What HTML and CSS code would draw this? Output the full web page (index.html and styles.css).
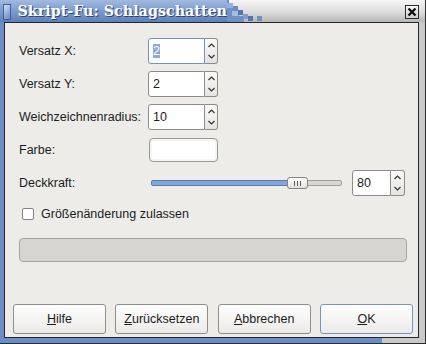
FILE: index.html
```html
<!DOCTYPE html>
<html lang="de">
<head>
  <meta charset="UTF-8">
  <title>Skript-Fu: Schlagschatten</title>
  <link rel="stylesheet" href="styles.css">
</head>
<body>
  <div class="window">
    <!-- Titelleiste -->
    <div class="titlebar">
      <div class="title-blue">
        <span class="app-icon"></span>
        <span class="title-text">Skript-Fu: Schlagschatten</span>
      </div>
      <svg class="title-steps" width="40" height="22" viewBox="0 0 40 22">
        <polygon points="0,0 0,22 17,22 17,16 12,16 12,11 7,11 7,6 2,6 2,0" fill="#6f90c6"/>
        <rect x="0" y="3" width="6" height="5" fill="#97b1dc"/>
        <rect x="6" y="6" width="5" height="5" fill="#6c8dc4"/>
        <rect x="11" y="10" width="5" height="5" fill="#5576b1"/>
        <rect x="5" y="11" width="6" height="5" fill="#a6bde3"/>
        <rect x="16" y="14" width="5" height="5" fill="#7d9dd1"/>
        <rect x="21" y="16" width="5" height="5" fill="#5576b1"/>
        <rect x="30" y="16" width="5" height="5" fill="#6f90c6"/>
      </svg>
      <button class="close-btn" type="button">
        <svg width="12" height="12" viewBox="0 0 12 12">
          <path d="M2.5 2.5 L9.5 9.5 M9.5 2.5 L2.5 9.5" stroke="#111" stroke-width="2.4"/>
        </svg>
      </button>
    </div>

    <div class="client">
      <div class="form">
        <label>Versatz X:</label>
        <div class="spin focused">
          <div class="spin-entry"><span class="selected">2</span></div>
          <div class="spin-btns">
            <span class="spin-half"><svg width="9" height="6" viewBox="0 0 9 6"><polyline points="1.5,5 4.5,2 7.5,5" fill="none" stroke="#333" stroke-width="1.2"/></svg></span>
            <span class="spin-half"><svg width="9" height="6" viewBox="0 0 9 6"><polyline points="1.5,1 4.5,4 7.5,1" fill="none" stroke="#333" stroke-width="1.2"/></svg></span>
          </div>
        </div>

        <label>Versatz Y:</label>
        <div class="spin">
          <div class="spin-entry">2</div>
          <div class="spin-btns">
            <span class="spin-half"><svg width="9" height="6" viewBox="0 0 9 6"><polyline points="1.5,5 4.5,2 7.5,5" fill="none" stroke="#333" stroke-width="1.2"/></svg></span>
            <span class="spin-half"><svg width="9" height="6" viewBox="0 0 9 6"><polyline points="1.5,1 4.5,4 7.5,1" fill="none" stroke="#333" stroke-width="1.2"/></svg></span>
          </div>
        </div>

        <label>Weichzeichnenradius:</label>
        <div class="spin">
          <div class="spin-entry">10</div>
          <div class="spin-btns">
            <span class="spin-half"><svg width="9" height="6" viewBox="0 0 9 6"><polyline points="1.5,5 4.5,2 7.5,5" fill="none" stroke="#333" stroke-width="1.2"/></svg></span>
            <span class="spin-half"><svg width="9" height="6" viewBox="0 0 9 6"><polyline points="1.5,1 4.5,4 7.5,1" fill="none" stroke="#333" stroke-width="1.2"/></svg></span>
          </div>
        </div>

        <label>Farbe:</label>
        <div class="color-btn"><span class="color-swatch"></span></div>

        <label>Deckkraft:</label>
        <div class="slider-row">
          <div class="slider">
            <div class="slider-fill" style="width: 146px;"></div>
            <div class="slider-thumb" style="left: 135px;"><i></i><i></i><i></i></div>
          </div>
          <div class="spin spin-wide">
            <div class="spin-entry">80</div>
            <div class="spin-btns">
              <span class="spin-half"><svg width="9" height="6" viewBox="0 0 9 6"><polyline points="1.5,5 4.5,2 7.5,5" fill="none" stroke="#333" stroke-width="1.2"/></svg></span>
              <span class="spin-half"><svg width="9" height="6" viewBox="0 0 9 6"><polyline points="1.5,1 4.5,4 7.5,1" fill="none" stroke="#333" stroke-width="1.2"/></svg></span>
            </div>
          </div>
        </div>
      </div>

      <label class="check-row"><span class="checkbox"></span>Größenänderung zulassen</label>

      <div class="progress"></div>

      <div class="button-row">
        <button type="button"><u>H</u>ilfe</button>
        <button type="button"><u>Z</u>urücksetzen</button>
        <button type="button"><u>A</u>bbrechen</button>
        <button type="button" class="btn-default"><u>O</u>K</button>
      </div>
    </div>
  </div>
</body>
</html>
```

FILE: styles.css
```css
body {
  margin: 0;
  font-family: "Liberation Sans", Arial, sans-serif;
  font-size: 12.5px;
  color: #1c1c1c;
}
.window {
  width: 426px;
  height: 344px;
  box-sizing: border-box;
  display: flex;
  flex-direction: column;
  background: linear-gradient(to right, #6d8ec5 0, #6d8ec5 382px, #c9c9c9 382px);
  border-right: 1px solid #333;
  border-bottom: 1px solid #2c2c2c;
}

/* Titelleiste */
.titlebar {
  height: 22px;
  flex: none;
  display: flex;
  align-items: stretch;
  background: linear-gradient(#f5f5f5, #dcdcdc 55%, #b7b7b7);
}
.title-blue {
  width: 227px;
  flex: none;
  display: flex;
  align-items: center;
  gap: 6px;
  padding-left: 3px;
  box-sizing: border-box;
  background: linear-gradient(#a2bae0, #7b9acd 50%, #5f80ba);
}
.app-icon {
  width: 16px;
  height: 16px;
  box-sizing: border-box;
  border: 1px solid #3f5f95;
  background: linear-gradient(135deg, #d4e0f3, #8eaadb 60%, #6a8bc3);
  margin-top: 1px;
}
.title-text {
  font-family: "DejaVu Serif", serif;
  font-weight: bold;
  font-size: 14.3px;
  color: #fff;
  text-shadow: 1px 1px 0 #2f4570;
  white-space: nowrap;
}
.title-steps {
  flex: none;
  display: block;
}
.close-btn {
  margin: 5px 6px 0 auto;
  width: 14px;
  height: 14px;
  padding: 0;
  box-sizing: border-box;
  border: 1px solid #2a2a2a;
  background: linear-gradient(#fafafa, #cecece);
  display: flex;
  align-items: center;
  justify-content: center;
}

/* Inhalt */
.client {
  flex: 1;
  margin: 0 6px 5px 4px;
  border: 1px solid #262626;
  background: #edece9;
  padding: 15px 11px 0 14px;
}
.form {
  display: grid;
  grid-template-columns: 129px 1fr;
  grid-auto-rows: 26px;
  row-gap: 7px;
  align-items: center;
}

.spin {
  display: flex;
  width: 70px;
  height: 26px;
}
.spin-entry {
  flex: 1;
  box-sizing: border-box;
  border: 1px solid #8d8c8a;
  border-radius: 3px 0 0 3px;
  background: #fff;
  padding-left: 4px;
  line-height: 24px;
}
.focused .spin-entry {
  border-color: #6f91c7;
}
.selected {
  display: inline-block;
  background: #8aaad9;
  color: #fff;
  line-height: 14px;
  vertical-align: middle;
  margin-top: -2px;
}
.spin-btns {
  width: 13px;
  flex: none;
  box-sizing: border-box;
  border: 1px solid #8d8c8a;
  border-left: none;
  border-radius: 0 3px 3px 0;
  background: linear-gradient(#fbfbfa, #e4e3e1);
  display: flex;
  flex-direction: column;
}
.spin-half {
  flex: 1;
  display: flex;
  align-items: center;
  justify-content: center;
}
.spin-half svg {
  display: block;
}
.spin-wide {
  width: 53px;
}
.spin-wide .spin-btns {
  width: 14px;
}

.color-btn {
  width: 69px;
  height: 24px;
  margin-left: 1px;
  box-sizing: border-box;
  border: 1px solid #9a9997;
  border-radius: 4px;
  background: #f4f4f3;
  padding: 2px;
}
.color-swatch {
  display: block;
  height: 100%;
  background: #fff;
  border-radius: 2px;
}

.slider-row {
  display: flex;
  align-items: center;
  gap: 10px;
  margin-right: 2px;
}
.slider {
  flex: 1;
  margin-left: 3px;
  height: 4px;
  position: relative;
  border: 1px solid #a19f9c;
  border-radius: 2px;
  background: #d7d6d3;
}
.slider-fill {
  position: absolute;
  left: -1px;
  top: -1px;
  bottom: -1px;
  box-sizing: border-box;
  border: 1px solid #5a7cb6;
  border-radius: 2px;
  background: #85a5d7;
}
.slider-thumb {
  position: absolute;
  top: -4px;
  width: 21px;
  height: 12px;
  box-sizing: border-box;
  border: 1px solid #858482;
  border-radius: 3px;
  background: linear-gradient(#ffffff, #e2e1df);
  display: flex;
  align-items: center;
  justify-content: center;
  gap: 2px;
}
.slider-thumb i {
  width: 1px;
  height: 5px;
  background: #5d5d5d;
}

.check-row {
  display: flex;
  align-items: center;
  gap: 7px;
  height: 14px;
  margin-top: 11px;
  padding-left: 3px;
}
.checkbox {
  width: 12px;
  height: 12px;
  box-sizing: border-box;
  border: 1px solid #858482;
  border-radius: 2px;
  background: #fff;
}

.progress {
  margin-top: 17px;
  height: 24px;
  box-sizing: border-box;
  border: 1px solid #a6a5a2;
  border-radius: 4px;
  background: #d6d5d2;
}

.button-row {
  display: flex;
  justify-content: space-between;
  margin: 42px -6px 0 -6px;
}
.button-row button {
  width: 93px;
  height: 30px;
  padding: 0;
  box-sizing: border-box;
  border: 1px solid #8f8e8b;
  border-radius: 3px;
  background: linear-gradient(#fefefe, #ebeae8);
  font: inherit;
  color: #1c1c1c;
}
.button-row .btn-default {
  border-color: #7894c4;
}
```
